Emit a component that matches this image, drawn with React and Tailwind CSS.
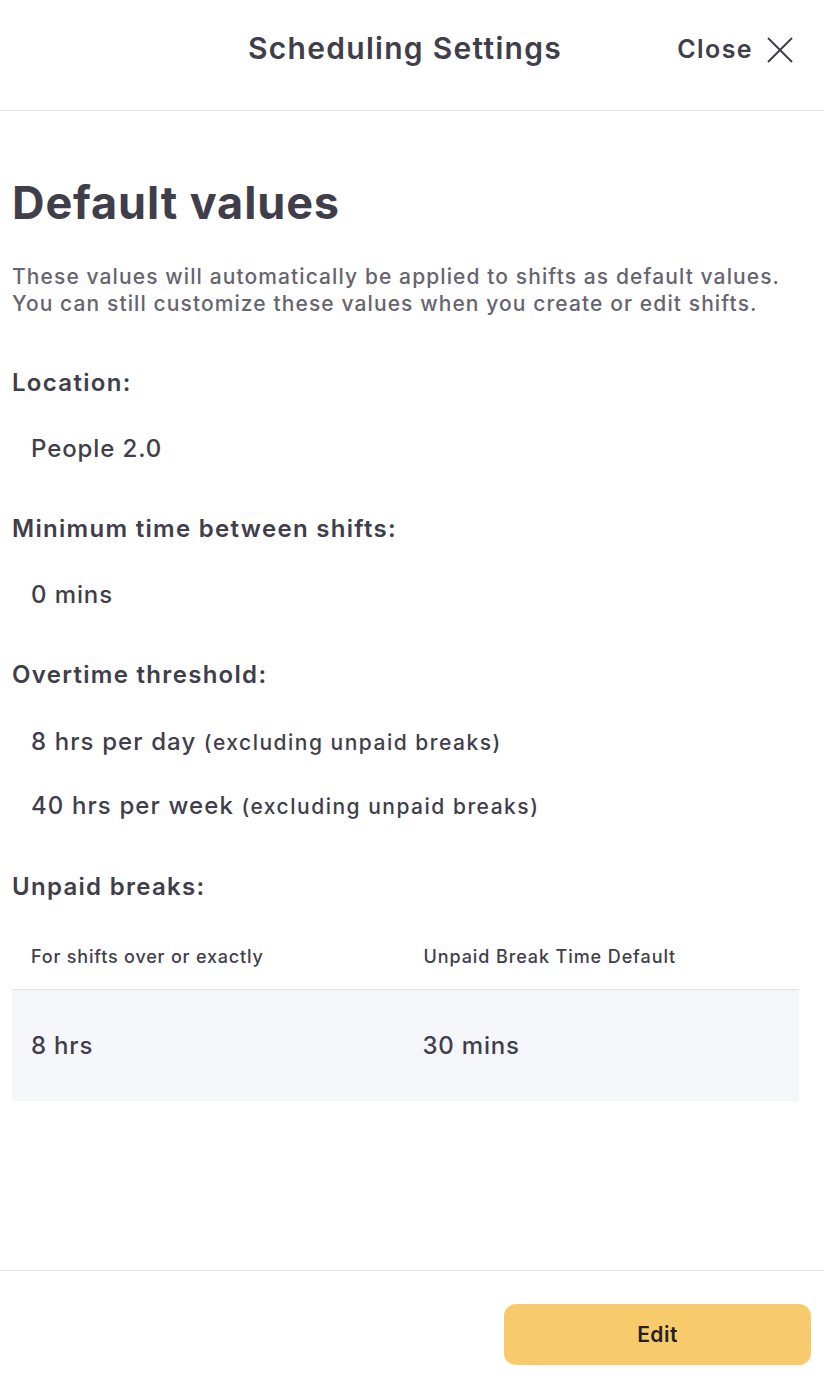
import React from "react";

const Section = ({ label, children }) => (
  <div className="flex flex-col">
    <h3 className="text-[24px] font-semibold text-[#403e4b] leading-[28px] tracking-[1.3px]">{label}</h3>
    {children}
  </div>
);

const App = () => {
  return (
    <div
      className="w-[824px] h-[1380px] bg-white flex flex-col text-[#403e4b]"
      style={{ fontFamily: "Inter, 'Open Sans', sans-serif" }}
    >
      <div className="h-[111px] shrink-0 border-b border-[#e3e3e6] flex items-start pt-[28px] relative">
        <h2 className="w-full text-center text-[30px] font-semibold leading-[40px] tracking-[1.3px]">
          <span className="relative left-[-7px]">Scheduling Settings</span>
        </h2>
        <button className="absolute right-[31px] top-[31px] flex items-center gap-[14px] text-[25px] font-semibold tracking-[1.4px] text-[#403e4b]">
          Close
          <svg width="26" height="26" viewBox="0 0 26 26" fill="none" stroke="#403e4b" strokeWidth="2">
            <path d="M1 1L25 25M25 1L1 25" />
          </svg>
        </button>
      </div>

      <div className="flex-1 px-[12px] pt-[64px] flex flex-col">
        <h1 className="text-[45px] font-bold leading-[56px] tracking-[0.9px]">Default values</h1>
        <p className="mt-[32px] text-[21px] leading-[27px] text-[#66646f] font-medium tracking-[1.1px] whitespace-nowrap">
          These values will automatically be applied to shifts as default values.
          <br />
          You can still customize these values when you create or edit shifts.
        </p>

        <div className="mt-[52px] flex flex-col gap-[52px]">
          <Section label="Location:">
            <div className="pl-[19px] mt-[38px] text-[24px] font-medium leading-[28px] tracking-[0.9px]">People 2.0</div>
          </Section>
          <Section label="Minimum time between shifts:">
            <div className="pl-[19px] mt-[38px] text-[24px] font-medium leading-[28px] tracking-[0.9px]">0 mins</div>
          </Section>
          <Section label="Overtime threshold:">
            <div className="pl-[19px] mt-[39px] text-[24px] font-medium leading-[28px] tracking-[1.1px]">
              8 hrs per day <span className="text-[21px] tracking-[1.5px]">(excluding unpaid breaks)</span>
            </div>
            <div className="pl-[19px] mt-[35px] text-[24px] font-medium leading-[28px] tracking-[1.1px]">
              40 hrs per week <span className="text-[21px] tracking-[1.5px]">(excluding unpaid breaks)</span>
            </div>
          </Section>
          <Section label="Unpaid breaks:">
            <div className="mt-[12px] w-[787px]">
              <div className="h-[77px] border-b border-[#e3e3e6] grid grid-cols-2 items-end pb-[20px]">
                <span className="pl-[19px] text-[18px] leading-[24px] font-medium tracking-[0.8px] text-[#403e4b]">For shifts over or exactly</span>
                <span className="pl-[18px] text-[18px] leading-[24px] font-medium tracking-[0.9px] text-[#403e4b]">Unpaid Break Time Default</span>
              </div>
              <div className="h-[111px] bg-[#f5f6fa] grid grid-cols-2 items-center">
                <span className="pl-[19px] text-[24px] font-medium tracking-[0.8px]">8 hrs</span>
                <span className="pl-[17px] text-[24px] font-medium tracking-[0.8px]">30 mins</span>
              </div>
            </div>
          </Section>
        </div>
      </div>

      <div className="h-[110px] shrink-0 border-t border-[#e3e3e6] flex justify-end items-start pt-[33px] pr-[13px]">
        <button className="w-[307px] h-[61px] rounded-[12px] bg-[#f7cb6b] text-[21px] font-semibold tracking-[0.5px] text-[#222126]">
          Edit
        </button>
      </div>
    </div>
  );
};

export default App;
